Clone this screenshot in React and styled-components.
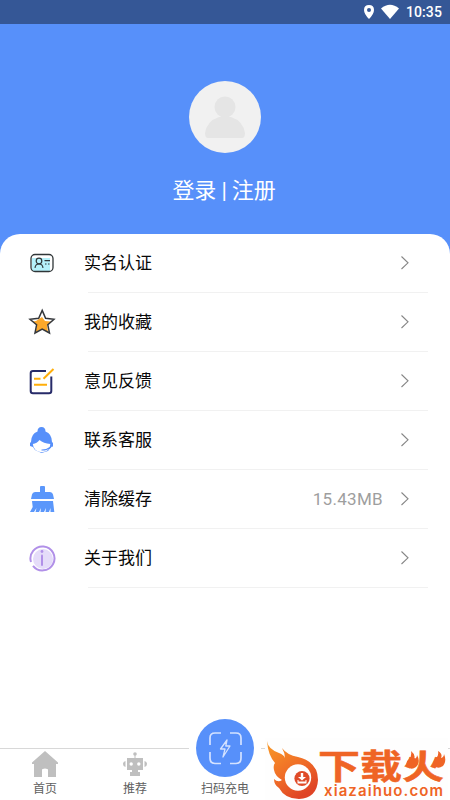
import styled, { createGlobalStyle } from "styled-components";

const GlobalStyle = createGlobalStyle`
  * {
    box-sizing: border-box;
  }
  body {
    margin: 0;
    font-family: Roboto, "Noto Sans CJK SC", sans-serif;
    background: #fff;
  }
`;

const Screen = styled.div`
  position: relative;
  display: flex;
  flex-direction: column;
  width: 450px;
  height: 800px;
  overflow: hidden;
  background: #fff;
`;

const StatusBar = styled.header`
  display: flex;
  align-items: center;
  justify-content: flex-end;
  height: 24px;
  flex: none;
  padding-right: 8px;
  background: #355796;
  color: #fff;
  font-size: 14px;
  font-weight: 500;
  line-height: 24px;
  letter-spacing: 0.1px;
  .pin {
    margin-right: 7px;
  }
  .wifi {
    margin-right: 7px;
  }
`;

const Profile = styled.section`
  display: flex;
  flex-direction: column;
  align-items: center;
  height: 230px;
  flex: none;
  padding-top: 57px;
  background: #5790fa;
`;

const Avatar = styled.div`
  width: 72px;
  height: 72px;
  border-radius: 50%;
  background: #f1f1f1;
  svg {
    display: block;
  }
`;

const Login = styled.div`
  margin: 22px 2px 0 0;
  color: #fff;
  font-size: 22px;
  line-height: 32px;
  letter-spacing: -0.2px;
  white-space: pre;
`;

const Menu = styled.main`
  flex: 1;
  margin-top: -20px;
  border-radius: 20px 20px 0 0;
  background: #fff;
`;

const StyledRow = styled.div`
  display: flex;
  align-items: center;
  height: 59px;
  padding: 0 39px 2px 28px;
  background: linear-gradient(#f1f1f1, #f1f1f1) 88px 58px / 340px 1px no-repeat;
  .icon {
    width: 28px;
    height: 28px;
    margin-right: 28px;
  }
  .label {
    flex: 1;
    color: #080808;
    font-size: 17px;
    line-height: 24px;
  }
  .value {
    margin-right: 16px;
    color: #9e9e9e;
    font-size: 17px;
    letter-spacing: 0.3px;
  }
`;

const TabBar = styled.nav`
  display: flex;
  height: 52px;
  flex: none;
  background: linear-gradient(#d8d8d8, #d8d8d8) 0 0 / 189px 1px no-repeat,
    linear-gradient(#d8d8d8, #d8d8d8) 261px 0 / 189px 1px no-repeat;
`;

const StyledTab = styled.div`
  display: flex;
  flex-direction: column;
  align-items: center;
  width: 90px;
  padding-top: 2px;
  color: #606060;
  font-size: 12px;
  line-height: 18px;
  svg {
    display: block;
    flex: none;
  }
  span {
    margin-top: 2px;
  }
`;

const ScanButton = styled.div`
  width: 58px;
  height: 58px;
  flex: none;
  margin: -31px 0 1px;
  border-radius: 50%;
  background: #5790fa;
`;

const Brand = styled.aside`
  position: absolute;
  left: 265px;
  top: 738px;
  width: 183px;
  height: 62px;
  background: #fefefe;
  color: #ef6425;
  .flame {
    position: absolute;
    left: 0;
    top: 0;
  }
  .name {
    position: absolute;
    left: 53px;
    top: 7px;
    font-family: "Noto Sans CJK SC", sans-serif;
    font-size: 42px;
    font-weight: 700;
    line-height: 40px;
    white-space: nowrap;
    -webkit-text-stroke: 0.6px #ef6425;
    transform: scaleY(0.8);
  }
  .site {
    position: absolute;
    left: 59px;
    top: 46px;
    font-family: Inter, sans-serif;
    font-size: 15px;
    font-weight: 600;
    line-height: 13px;
    letter-spacing: 1.1px;
  }
`;

function IdCard() {
  return (
    <svg className="icon" viewBox="0 0 28 28" fill="none">
      <path d="M4 9H22V22H4Z" fill="#b5f1fa" />
      <rect x="3" y="5.5" width="22" height="17" rx="4" stroke="#303638" strokeWidth="1.3" />
      <circle cx="11" cy="12" r="2.8" stroke="#303638" strokeWidth="1.2" />
      <path d="M7 18.8Q7.5 15 11 15Q14.5 15 15 18.8M16.5 11.7H22M17 15H18.5M20 15H21.5" stroke="#303638" strokeWidth="1.2" />
    </svg>
  );
}

function Star() {
  return (
    <svg className="icon" viewBox="0 0 28 28" fill="none">
      <path d="M8 13L14 9L17 13L23 13.5L19 17.5L20 24L14 21L7.5 24L9 17.5L5 13.5Z" fill="#fba82b" />
      <path d="M14.2 2.4L17.6 10.2L26 11.2L19.8 16.8L21.5 25L14.2 21L7 25L8.6 16.8L2 11.2L10.7 10.2Z" stroke="#34373b" strokeWidth="1.5" />
    </svg>
  );
}

function Note() {
  return (
    <svg className="icon" viewBox="0 0 28 28" fill="none">
      <path d="M18 4H5Q2.7 4 2.7 6.3V24Q2.7 26.3 5 26.3H21Q23.3 26.3 23.3 24V9.5" stroke="#272b69" strokeWidth="2" />
      <path d="M6 11.7H12.5M6 17.7H19M15.5 11.7L25.5 2" stroke="#ffae0b" strokeWidth="2" />
    </svg>
  );
}

function Service() {
  return (
    <svg className="icon" viewBox="0 0 28 28">
      <path d="M9.5 5.5Q9.5 1 13.5 1Q17.5 1 17.5 5.5Q24 8 24 16L25 17V20.5L23 21L20 25L13.5 27L7 24L5 21L2 20V17L3 16Q3 8 9.5 5.5Z" fill="#5790fa" />
      <path d="M4.8 18Q9 17.5 11.5 14Q15.5 17.5 22.3 18Q22 26 13.7 26.2Q5.5 25.5 4.8 18Z" fill="#fff" />
      <path d="M23 21Q19 24.2 13.5 24" fill="none" stroke="#5790fa" strokeWidth="1.2" />
    </svg>
  );
}

function Brush() {
  return (
    <svg className="icon" viewBox="0 0 28 28" fill="#5b97fb">
      <path d="M12 2Q12 1 13 1H16Q17 1 17 2V7H22Q24.5 7.2 25 9.5L26 14H3L4 9.5Q4.5 7.2 7 7H12Z" />
      <path d="M4 16H25L26.3 27H22.5L22.5 23L21 27H17.5L18 23L16 27H12.5L13 23L11 27H7.5L8.5 23L6 27H2L4.7 22Z" />
    </svg>
  );
}

function Info() {
  return (
    <svg className="icon" viewBox="0 0 28 28" fill="none">
      <circle cx="15" cy="15" r="10" fill="#e5dcf9" />
      <path d="M3 18A12 12 0 1 1 5 21.8" stroke="#b190e8" strokeWidth="2" />
      <path d="M14 11.5V21" stroke="#b190e8" strokeWidth="2" strokeLinecap="round" />
      <circle cx="14" cy="7.5" r="1.4" fill="#b190e8" />
    </svg>
  );
}

const rows = [
  { label: "实名认证", icon: <IdCard /> },
  { label: "我的收藏", icon: <Star /> },
  { label: "意见反馈", icon: <Note /> },
  { label: "联系客服", icon: <Service /> },
  { label: "清除缓存", icon: <Brush />, value: "15.43MB" },
  { label: "关于我们", icon: <Info /> },
];

function Row(props) {
  return (
    <StyledRow>
      {props.icon}
      <span className="label">{props.label}</span>
      {props.value && <span className="value">{props.value}</span>}
      <svg width="12" height="16" fill="none">
        <path d="M2.5 1.5L9 7.8L2.5 14" stroke="#858585" strokeWidth="1.1" />
      </svg>
    </StyledRow>
  );
}

function Tabs() {
  return (
    <TabBar>
      <StyledTab>
        <svg width="28" height="28" fill="#bfbfbf">
          <path d="M14 1L27 12.5V14H25V27H17V20Q17 18.5 14 18.5Q11 18.5 11 20V27H3V14H1V12.5Z" />
        </svg>
        <span>首页</span>
      </StyledTab>
      <StyledTab>
        <svg width="28" height="28" fill="#bfbfbf">
          <circle cx="14" cy="4" r="1.8" />
          <path d="M13.5 5H14.5V8H22V20H17V22H19V26H9V22H11V20H6V8H13.5ZM4.5 11V17Q2 16.5 2 14Q2 11.5 4.5 11ZM23.5 11Q26 11.5 26 14Q26 16.5 23.5 17Z" />
          <circle cx="10.2" cy="14" r="1.7" fill="#fff" />
          <circle cx="17.8" cy="14" r="1.7" fill="#fff" />
        </svg>
        <span>推荐</span>
      </StyledTab>
      <StyledTab>
        <ScanButton>
          <svg width="58" height="58" fill="none" stroke="#d4e2ff" strokeWidth="1.7">
            <path d="M14 26V19Q14 14 19 14H25M34 14H40Q45 14 45 19V26M14 33V39Q14 44.5 19 44.5H25M34 44.5H40Q45 44.5 45 39V33" />
            <path d="M31 21L24.5 30H29L27 38L34 27H29.8Z" strokeWidth="1.3" strokeLinejoin="round" />
          </svg>
        </ScanButton>
        <span>扫码充电</span>
      </StyledTab>
    </TabBar>
  );
}

function Watermark() {
  return (
    <Brand>
      <span className="name">下载火</span>
      <svg className="flame" width="183" height="62">
        <defs>
          <linearGradient id="fire" x2="0.6" y2="1">
            <stop stopColor="#f99a27" />
            <stop offset="0.6" stopColor="#ef6b27" />
            <stop offset="1" stopColor="#df4425" />
          </linearGradient>
        </defs>
        <path d="M2 3Q3 11 14 15Q19 17 20 20Q20 15 17 10Q22 17 33 19Q53 24 53 42Q52 60 34 61Q20 61 14 50Q9 47 9 41Q13 45 17 42Q10 38 9 32Q8 27 10 25Q3 17 2 3Z" fill="url(#fire)" />
        <circle cx="33" cy="39.5" r="13.2" fill="#fefefe" />
        <circle cx="37" cy="40.5" r="7.6" fill="#df4b29" />
        <path d="M35.8 35H38.2V39H41L37 42.5L33 39H35.8ZM32.5 42V45.5H41.5V42H40.5V43.5H33.5V42Z" fill="#fff" />
        <path d="M146 13Q151 17 149 21Q152 20 152 17Q156 24 151 29Q146 33 142 28Q140 24 144 21Q147 18 146 13ZM173 13Q178 16 176 20Q179 19 179 16Q182 23 178 28Q172 32 169 27Q167 23 171 20Q174 18 173 13Z" fill="#ef6425" />
      </svg>
      <span className="site">xiazaihuo.com</span>
    </Brand>
  );
}

function App() {
  return (
    <>
      <GlobalStyle />
      <Screen>
        <StatusBar>
          <svg className="pin" width="10" height="16" viewBox="0 0 10 16">
            <path fill="#fff" fillRule="evenodd" d="M5 1Q10 1 10 6Q10 10 5 15Q0 10 0 6Q0 1 5 1ZM5 4A2 2 0 1 0 5 8A2 2 0 1 0 5 4Z" />
          </svg>
          <svg className="wifi" width="18" height="16">
            <path d="M0 4.5Q9-3 18 4.5L9 15Z" fill="#fff" />
          </svg>
          <span>10:35</span>
        </StatusBar>
        <Profile>
          <Avatar>
            <svg width="72" height="72" fill="#e5e5e5">
              <circle cx="36" cy="26" r="10.5" />
              <path d="M16 52Q18 40 30 36H42Q54 40 56 52Q56 57 53 57H19Q16 57 16 52Z" />
            </svg>
          </Avatar>
          <Login>登录 | 注册</Login>
        </Profile>
        <Menu>
          {rows.map(row => (
            <Row key={row.label} {...row} />
          ))}
        </Menu>
        <Tabs />
        <Watermark />
      </Screen>
    </>
  );
}

export default App;
